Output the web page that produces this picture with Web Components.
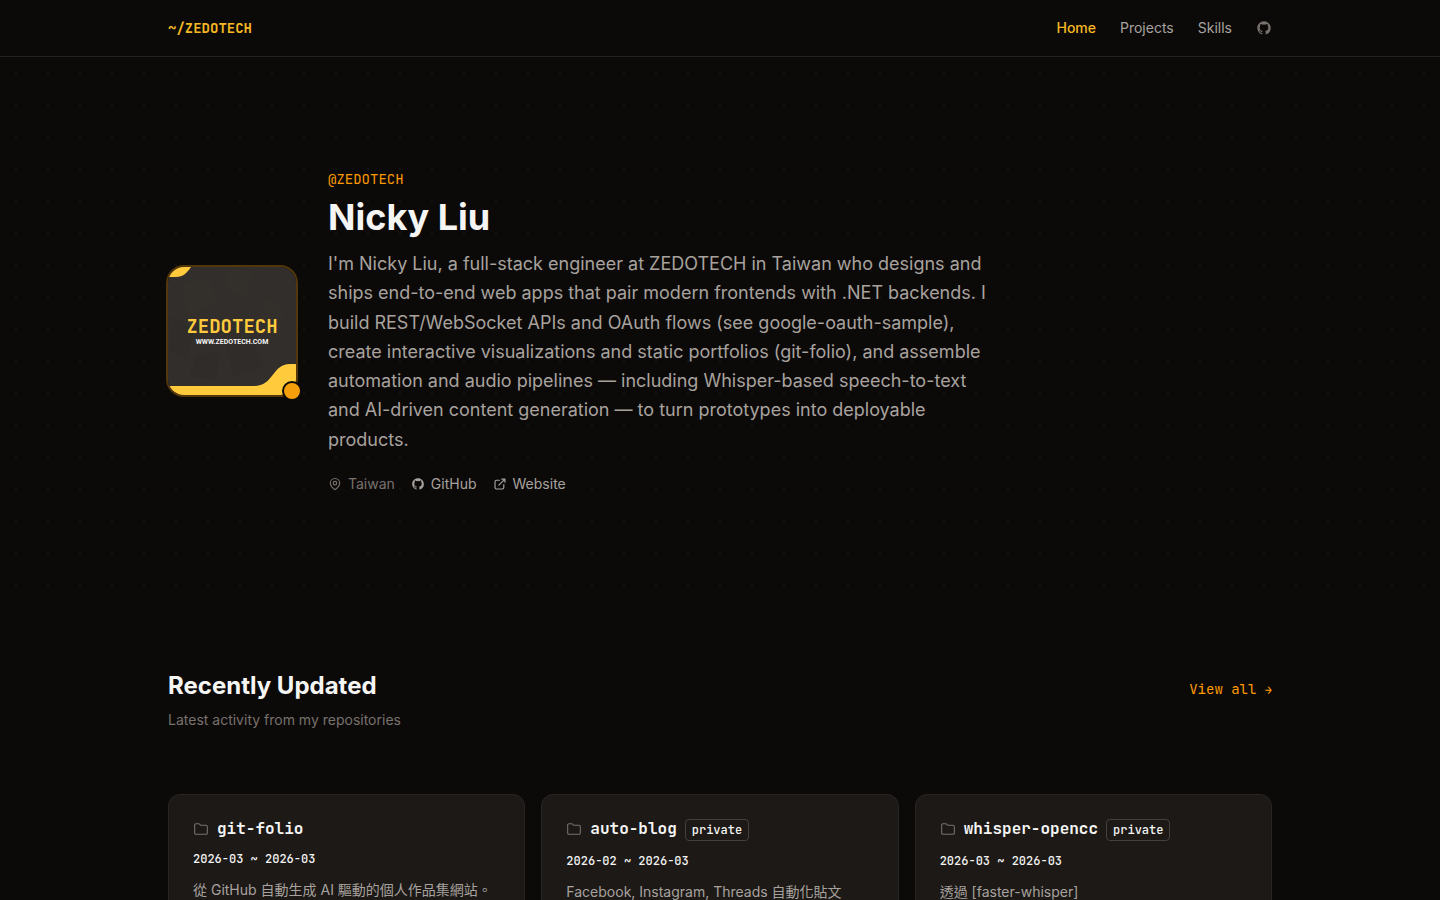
<!DOCTYPE html>
<html lang="en">
<head>
<meta charset="utf-8">
<meta name="viewport" content="width=device-width, initial-scale=1">
<title>Nicky Liu</title>
<style>
    :root {
        --bg: #0c0a09;
        --surface: #1c1917;
        --border: #292524;
        --text: #f5f5f4;
        --text-soft: #a8a29e;
        --text-dim: #78716c;
        --accent: #fe9a00;
        --status: #f59e0b;
        --brand: #f5b822;
        --sans: Inter, "Noto Sans CJK TC", sans-serif;
        --mono: "JetBrains Mono", "DejaVu Sans Mono", "Noto Sans CJK TC", monospace;
    }
    body {
        margin: 0;
        background: var(--bg);
        color: var(--text);
        font: 14px/20px var(--sans);
    }
</style>
</head>
<body>
    <site-header brand="~/ZEDOTECH">
        <nav-link href="#home" active>Home</nav-link>
        <nav-link href="#projects">Projects</nav-link>
        <nav-link href="#skills">Skills</nav-link>
        <nav-link href="#github" label="GitHub"><ui-icon name="github" size="16"></ui-icon></nav-link>
    </site-header>

    <main>
        <profile-hero handle="@ZEDOTECH" name="Nicky Liu">
            <profile-avatar slot="avatar"></profile-avatar>
            I'm Nicky Liu, a full-stack engineer at ZEDOTECH in Taiwan who designs and ships end-to-end web apps that pair modern frontends with .NET backends. I build REST/WebSocket APIs and OAuth flows (see google-oauth-sample), create interactive visualizations and static portfolios (git-folio), and assemble automation and audio pipelines — including Whisper-based speech-to-text and AI-driven content generation — to turn prototypes into deployable products.
            <meta-item slot="meta" icon="pin">Taiwan</meta-item>
            <meta-item slot="meta" icon="github" href="#github">GitHub</meta-item>
            <meta-item slot="meta" icon="external" href="#website">Website</meta-item>
        </profile-hero>

        <repo-section heading="Recently Updated" subtitle="Latest activity from my repositories">
            <repo-card name="git-folio" dates="2026-03 ~ 2026-03">從 GitHub 自動生成 AI 驅動的個人作品集網站。</repo-card>
            <repo-card name="auto-blog" dates="2026-02 ~ 2026-03" private>Facebook, Instagram, Threads 自動化貼文</repo-card>
            <repo-card name="whisper-opencc" dates="2026-03 ~ 2026-03" private>透過 [faster-whisper]</repo-card>
        </repo-section>
    </main>

<script>
const ICONS = {
    github: '<path fill="currentColor" stroke="none" transform="translate(1.5 1.5) scale(.875)" d="M12 .5C5.65.5.5 5.65.5 12c0 5.08 3.29 9.39 7.86 10.91.58.11.79-.25.79-.55v-2.15c-3.2.7-3.87-1.36-3.87-1.36-.52-1.33-1.28-1.68-1.28-1.68-1.04-.71.08-.7.08-.7 1.15.08 1.76 1.19 1.76 1.19 1.03 1.76 2.69 1.25 3.35.96.1-.75.4-1.25.73-1.54-2.56-.29-5.25-1.28-5.25-5.68 0-1.26.45-2.28 1.18-3.09-.12-.29-.51-1.46.11-3.04 0 0 .97-.31 3.16 1.18a11 11 0 0 1 5.76 0c2.2-1.49 3.16-1.18 3.16-1.18.63 1.58.23 2.75.11 3.04.74.81 1.18 1.83 1.18 3.09 0 4.41-2.69 5.38-5.26 5.67.41.36.78 1.06.78 2.14v3.15c0 .31.21.67.8.55A11.5 11.5 0 0 0 23.5 12C23.5 5.65 18.35.5 12 .5z"/>',
    pin: '<path d="M20 10.5c0 4.2-3.7 7.8-7 10.6a1.6 1.6 0 0 1-2 0c-3.3-2.8-7-6.4-7-10.6a8 8 0 0 1 16 0z"/><circle cx="12" cy="10.5" r="3"/>',
    external: '<path d="M11 5.500H6A2.500 2.500 0 0 0 3.500 8v10A2.500 2.500 0 0 0 6 20.500h10a2.500 2.500 0 0 0 2.500-2.500v-5M15 3.500h5.500V9M10 14 20 4"/>',
    folder: '<path stroke-width="1.6" d="M19.500 20a2 2 0 0 0 2-2V8.300a2 2 0 0 0-2-2h-7.300a2 2 0 0 1-1.400-.6l-.9-.9a2 2 0 0 0-1.400-.6h-4a2 2 0 0 0-2 2V18a2 2 0 0 0 2 2z"/>'
};

class UiIcon extends HTMLElement {
    connectedCallback() {
        const size = this.getAttribute('size') || 14;
        this.attachShadow({ mode: 'open' }).innerHTML = `
            <style>
                :host {
                    display: block;
                    flex: none;
                }
                svg {
                    display: block;
                    fill: none;
                    stroke: currentColor;
                    stroke-width: 2;
                    stroke-linecap: round;
                    stroke-linejoin: round;
                }
            </style>
            <svg width="${size}" height="${size}" viewBox="0 0 24 24" aria-hidden="true">${ICONS[this.getAttribute('name')]}</svg>
        `;
    }
}

class NavLink extends HTMLElement {
    connectedCallback() {
        const label = this.getAttribute('label');
        this.attachShadow({ mode: 'open' }).innerHTML = `
            <style>
                :host {
                    display: block;
                    color: var(--text-soft);
                }
                :host([active]) {
                    color: var(--brand);
                    font-weight: 500;
                }
                :host([label]) {
                    color: var(--text-dim);
                }
                a {
                    display: block;
                    color: inherit;
                    text-decoration: none;
                }
                a:hover {
                    color: var(--text);
                }
            </style>
            <a href="${this.getAttribute('href')}" ${label ? `aria-label="${label}"` : ''}><slot></slot></a>
        `;
    }
}

class SiteHeader extends HTMLElement {
    connectedCallback() {
        this.attachShadow({ mode: 'open' }).innerHTML = `
            <style>
                :host {
                    display: block;
                    border-bottom: 1px solid #242120;
                }
                header {
                    display: flex;
                    align-items: center;
                    justify-content: space-between;
                    box-sizing: border-box;
                    max-width: 1152px;
                    height: 56px;
                    margin: 0 auto;
                    padding: 0 24px;
                }
                .brand {
                    color: var(--brand);
                    font-family: var(--mono);
                    font-weight: 700;
                    text-decoration: none;
                }
                nav {
                    display: flex;
                    align-items: center;
                    gap: 24px;
                }
            </style>
            <header>
                <a class="brand" href="#home">${this.getAttribute('brand')}</a>
                <nav><slot></slot></nav>
            </header>
        `;
    }
}

class ProfileAvatar extends HTMLElement {
    connectedCallback() {
        this.attachShadow({ mode: 'open' }).innerHTML = `
            <style>
                :host {
                    display: block;
                    position: relative;
                    flex: none;
                    width: 128px;
                    height: 128px;
                }
                svg {
                    display: block;
                    border-radius: 16px;
                    box-shadow: 0 0 0 2px #53370a;
                }
                text {
                    font-weight: 700;
                    text-anchor: middle;
                }
                .logo {
                    font-family: var(--mono);
                    font-size: 19px;
                    fill: #ffcb3d;
                }
                .site {
                    font-family: Roboto, sans-serif;
                    font-size: 7px;
                    fill: #f5f5f4;
                }
                .status {
                    position: absolute;
                    right: -6px;
                    bottom: -6px;
                    width: 16px;
                    height: 16px;
                    border: 2px solid var(--bg);
                    border-radius: 50%;
                    background: var(--status);
                }
            </style>
            <svg width="128" height="128" viewBox="0 0 128 128" role="img" aria-label="Zedotech">
                <rect width="128" height="128" fill="#312e2b"/>
                <path d="M12 18 42 8 48 36 20 50zM60 0 86 4 78 30 58 24zM98 30 116 44 112 72 90 56z" fill="#33302c"/>
                <path d="M4 50 26 62 18 92 2 84zM58 78 82 70 96 98 66 110zM28 88 52 84 48 112 22 110z" fill="#2f2c29"/>
                <path d="M0 0H23C19 6 15 10 8 10H0z" fill="#ffcb3d"/>
                <path d="M0 119H86C106 119 104 97 122 97H128V128H0z" fill="#ffcb3d"/>
                <text class="logo" x="64" y="66">ZEDOTECH</text>
                <text class="site" x="64" y="77">WWW.ZEDOTECH.COM</text>
            </svg>
            <div class="status"></div>
        `;
    }
}

class MetaItem extends HTMLElement {
    connectedCallback() {
        const href = this.getAttribute('href');
        const tag = href ? 'a' : 'span';
        this.attachShadow({ mode: 'open' }).innerHTML = `
            <style>
                :host {
                    display: block;
                    color: var(--text-dim);
                }
                :host([href]) {
                    color: var(--text-soft);
                }
                .item {
                    display: flex;
                    align-items: center;
                    gap: 6px;
                    color: inherit;
                    text-decoration: none;
                }
            </style>
            <${tag} class="item" ${href ? `href="${href}"` : ''}>
                <ui-icon name="${this.getAttribute('icon')}"></ui-icon>
                <slot></slot>
            </${tag}>
        `;
    }
}

class ProfileHero extends HTMLElement {
    connectedCallback() {
        this.attachShadow({ mode: 'open' }).innerHTML = `
            <style>
                :host {
                    display: block;
                    background: radial-gradient(circle, #141311 1px, transparent 1px) 0 0 / 32px 32px;
                }
                section {
                    display: flex;
                    align-items: center;
                    gap: 32px;
                    box-sizing: border-box;
                    max-width: 1152px;
                    margin: 0 auto;
                    padding: 112px 24px;
                }
                .info {
                    max-width: 672px;
                }
                .handle {
                    margin: 0 0 8px;
                    color: var(--accent);
                    font-family: var(--mono);
                }
                h1 {
                    margin: 0 0 12px;
                    font-size: 36px;
                    line-height: 40px;
                    font-weight: 700;
                }
                .bio {
                    margin: 0 0 20px;
                    color: var(--text-soft);
                    font-size: 18px;
                    line-height: 1.625;
                }
                .meta {
                    display: flex;
                    flex-wrap: wrap;
                    gap: 16px;
                }
            </style>
            <section>
                <slot name="avatar"></slot>
                <div class="info">
                    <p class="handle">${this.getAttribute('handle')}</p>
                    <h1>${this.getAttribute('name')}</h1>
                    <p class="bio"><slot></slot></p>
                    <div class="meta"><slot name="meta"></slot></div>
                </div>
            </section>
        `;
    }
}

class RepoSection extends HTMLElement {
    connectedCallback() {
        this.attachShadow({ mode: 'open' }).innerHTML = `
            <style>
                :host {
                    display: block;
                }
                section {
                    box-sizing: border-box;
                    max-width: 1152px;
                    margin: 0 auto;
                    padding: 64px 24px;
                }
                .top {
                    display: flex;
                    align-items: baseline;
                    justify-content: space-between;
                }
                h2 {
                    margin: 0;
                    font-size: 24px;
                    line-height: 32px;
                    font-weight: 700;
                }
                a {
                    color: var(--accent);
                    font-family: var(--mono);
                    text-decoration: none;
                }
                .arrow {
                    font-size: 12px;
                }
                p {
                    margin: 8px 0 64px;
                    color: var(--text-dim);
                }
                .grid {
                    display: grid;
                    grid-template-columns: repeat(auto-fit, minmax(320px, 1fr));
                    gap: 16px;
                }
            </style>
            <section>
                <div class="top">
                    <h2>${this.getAttribute('heading')}</h2>
                    <a href="#projects">View all <span class="arrow">→</span></a>
                </div>
                <p>${this.getAttribute('subtitle')}</p>
                <div class="grid"><slot></slot></div>
            </section>
        `;
    }
}

class RepoCard extends HTMLElement {
    connectedCallback() {
        this.attachShadow({ mode: 'open' }).innerHTML = `
            <style>
                :host {
                    display: block;
                    padding: 24px;
                    border: 1px solid var(--border);
                    border-radius: 12px;
                    background: var(--surface);
                }
                .title {
                    display: flex;
                    align-items: flex-start;
                    gap: 8px;
                    font-family: var(--mono);
                }
                ui-icon {
                    padding-top: 2px;
                    color: var(--text-dim);
                }
                h3 {
                    margin: 0;
                    font-size: 16px;
                    line-height: 20px;
                    font-weight: 700;
                }
                .badge {
                    padding: 2px 6px;
                    border: 1px solid #44403c;
                    border-radius: 4px;
                    font-size: 12px;
                    line-height: 16px;
                    font-weight: 500;
                }
                .dates {
                    margin: 12px 0;
                    font-family: var(--mono);
                    font-size: 12px;
                    line-height: 16px;
                    font-weight: 500;
                }
                .desc {
                    margin: 0;
                    color: var(--text-soft);
                    line-height: 22px;
                }
            </style>
            <div class="title">
                <ui-icon name="folder" size="16"></ui-icon>
                <h3>${this.getAttribute('name')}</h3>
                ${this.hasAttribute('private') ? '<span class="badge">private</span>' : ''}
            </div>
            <p class="dates">${this.getAttribute('dates')}</p>
            <p class="desc"><slot></slot></p>
        `;
    }
}

customElements.define('ui-icon', UiIcon);
customElements.define('nav-link', NavLink);
customElements.define('site-header', SiteHeader);
customElements.define('profile-avatar', ProfileAvatar);
customElements.define('meta-item', MetaItem);
customElements.define('profile-hero', ProfileHero);
customElements.define('repo-section', RepoSection);
customElements.define('repo-card', RepoCard);
</script>
</body>
</html>
